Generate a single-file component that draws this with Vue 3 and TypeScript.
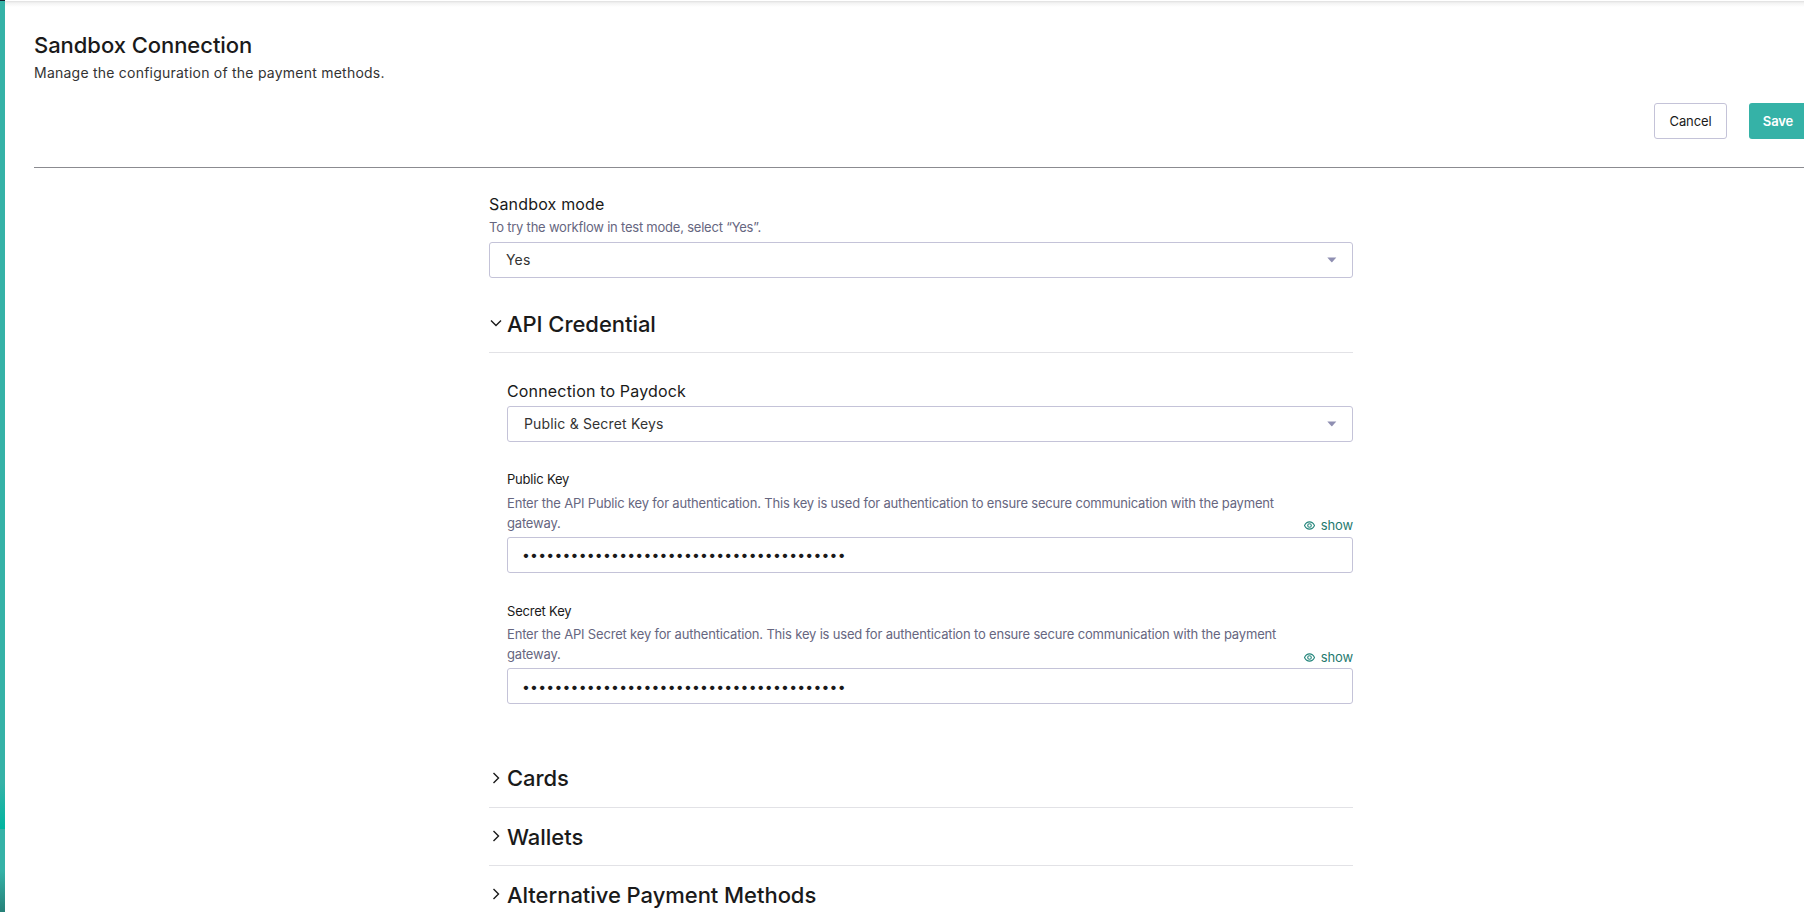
<script setup lang="ts">
import { ref } from 'vue'

interface KeyField {
  id: string
  label: string
  description: string
  value: string
  visible: boolean
}

const keys = ref<KeyField[]>([
  {
    id: 'public',
    label: 'Public Key',
    description:
      'Enter the API Public key for authentication. This key is used for authentication to ensure secure communication with the payment gateway.',
    value: 'x'.repeat(40),
    visible: false,
  },
  {
    id: 'secret',
    label: 'Secret Key',
    description:
      'Enter the API Secret key for authentication. This key is used for authentication to ensure secure communication with the payment gateway.',
    value: 'x'.repeat(40),
    visible: false,
  },
])

const collapsed: string[] = ['Cards', 'Wallets', 'Alternative Payment Methods']
</script>

<template>
  <div class="screen">
    <aside class="rail">
      <div class="rail-cap"></div>
      <div class="rail-main"></div>
      <div class="rail-foot"></div>
    </aside>
    <main class="page">
      <div class="top-shadow"></div>
      <header class="header">
        <h1 class="title">Sandbox Connection</h1>
        <p class="subtitle">Manage the configuration of the payment methods.</p>
        <div class="actions">
          <button class="btn cancel" type="button">Cancel</button>
          <button class="btn save" type="button">Save</button>
        </div>
      </header>

      <form class="form" @submit.prevent>
        <div class="label">Sandbox mode</div>
        <div class="hint">To try the workflow in test mode, select “Yes”.</div>
        <div class="select mode">
          <span>Yes</span>
          <svg class="caret" width="10" height="6" viewBox="0 0 10 6"><path d="M0.3 0.4h9L5.3 5.1a.7.7 0 0 1-1 0z" /></svg>
        </div>

        <section class="section open">
          <svg class="chevron" width="14" height="14" viewBox="0 0 14 14"><path d="M2 4.5l5 5 5-5" /></svg>
          <h2>API Credential</h2>
        </section>

        <div class="credentials">
          <div class="label">Connection to Paydock</div>
          <div class="select connection">
            <span>Public &amp; Secret Keys</span>
            <svg class="caret" width="10" height="6" viewBox="0 0 10 6"><path d="M0.3 0.4h9L5.3 5.1a.7.7 0 0 1-1 0z" /></svg>
          </div>

          <div v-for="key in keys" :key="key.id" class="key" :class="key.id">
            <label class="key-label" :for="key.id">{{ key.label }}</label>
            <div class="key-info">
              <p class="hint">{{ key.description }}</p>
              <button class="toggle" type="button" @click="key.visible = !key.visible">
                <svg width="11" height="9" viewBox="0 0 11 9">
                  <path d="M.5 4.5C1.7 2 3.4.9 5.5.9S9.3 2 10.5 4.5C9.3 7 7.6 8.1 5.5 8.1S1.7 7 .5 4.5z" />
                  <circle cx="5.5" cy="4.5" r="1.8" />
                </svg>
                <span>{{ key.visible ? 'hide' : 'show' }}</span>
              </button>
            </div>
            <input :id="key.id" v-model="key.value" class="input" :type="key.visible ? 'text' : 'password'" />
          </div>
        </div>

        <section v-for="name in collapsed" :key="name" class="section">
          <svg class="chevron" width="14" height="14" viewBox="0 0 14 14"><path d="M4.5 2l5 5-5 5" /></svg>
          <h2>{{ name }}</h2>
        </section>
      </form>
    </main>
  </div>
</template>

<style>
body {
  margin: 0;
  overflow: hidden;
  background: #fff;
}
</style>

<style scoped>
* {
  box-sizing: border-box;
}
.screen {
  display: flex;
  width: 100%;
  height: 912px;
  overflow: hidden;
  font-family: Inter, 'Liberation Sans', sans-serif;
  color: #1a1a1a;
}
.rail {
  display: flex;
  flex: 0 0 5px;
  flex-direction: column;
}
.rail-cap {
  height: 1px;
  background: #16202c;
}
.rail-main {
  height: 828px;
  background: linear-gradient(to bottom, #35b2a7 0, #35b2a7 782px, #00b5a0 828px);
}
.rail-foot {
  flex: 1;
  background: linear-gradient(to bottom, #35b2a7 0, #35b2a7 42px, #268078 83px);
}
.page {
  flex: 1;
  min-width: 0;
}
.top-shadow {
  height: 7px;
  background: linear-gradient(to bottom, #fff 0, #fff 1px, #dfdfdf 1px, #f3f3f3 3px, #fff 7px);
}
.header {
  margin-left: 29px;
  padding-top: 24px;
  height: 161px;
  border-bottom: 1px solid #8b8b90;
}
.title,
.section h2 {
  margin: 0;
  font-size: 22px;
  line-height: 28px;
  font-weight: 500;
  letter-spacing: -0.05px;
}
.subtitle {
  margin: 4px 0 20px;
  font-size: 14px;
  line-height: 20px;
  letter-spacing: 0.23px;
  color: #333;
}
.actions {
  display: flex;
  justify-content: flex-end;
  gap: 22px;
  margin-right: -3px;
}
.btn {
  height: 36px;
  padding: 0;
  border-radius: 3px;
  font: 400 13px/20px Inter, sans-serif;
  letter-spacing: -0.1px;
}
.cancel {
  width: 73px;
  border: 1px solid #c4c3d8;
  background: #fff;
  color: #1a1a1a;
}
.save {
  width: 58px;
  border: 0;
  background: #35b2a7;
  color: #fff;
  font-weight: 600;
}
.form {
  width: 864px;
  margin: 24px 0 0 484px;
}
.label {
  font-size: 16px;
  line-height: 24px;
  letter-spacing: 0.17px;
}
.hint {
  margin: 0;
  font-size: 13px;
  line-height: 20px;
  letter-spacing: -0.18px;
  color: #666680;
}
.label + .hint {
  margin-top: 1px;
  letter-spacing: -0.22px;
}
.mode {
  margin-top: 5px;
}
.select {
  display: flex;
  align-items: center;
  justify-content: space-between;
  height: 36px;
  padding: 0 15px 0 16px;
  border: 1px solid #c4c3d8;
  border-radius: 3px;
  font-size: 14px;
  letter-spacing: 0.16px;
  color: #333;
}
.select span {
  padding-bottom: 1px;
}
.caret {
  fill: #8f8fb2;
}
.section {
  display: flex;
  height: 58px;
  padding-top: 15px;
  border-bottom: 1px solid #e2e2e6;
}
.section.open {
  margin-top: 17px;
}
.credentials + .section h2 {
  margin-top: -1px;
}
.chevron {
  margin: 6px 4px 0 0;
  fill: none;
  stroke: #1a1a1a;
  stroke-width: 1.4;
}
.credentials {
  height: 397px;
  padding: 26px 0 0 18px;
}
.connection {
  margin-top: 3px;
}
.key {
  margin-top: 27px;
}
.key.secret {
  margin-top: 28px;
}
.key-label {
  display: block;
  font-size: 13px;
  line-height: 20px;
  letter-spacing: -0.2px;
}
.key-info {
  display: flex;
  justify-content: space-between;
  align-items: flex-end;
  margin: 4px 0;
}
.secret .key-info {
  margin-top: 3px;
}
.key-info .hint {
  width: 780px;
}
.toggle {
  display: flex;
  align-items: center;
  gap: 6px;
  height: 20px;
  margin-bottom: -2px;
  padding: 0;
  border: 0;
  background: none;
  font: 400 13px/20px Inter, sans-serif;
  letter-spacing: -0.1px;
  color: #1f7a6f;
}
.secret .toggle {
  margin-bottom: -3px;
}
.toggle svg {
  fill: none;
  stroke: #23857b;
  stroke-width: 1.1;
}
.input {
  display: block;
  width: 100%;
  height: 36px;
  padding: 0 14px;
  border: 1px solid #c4c3d8;
  border-radius: 3px;
  outline: 0;
  background: #fff;
  font: 400 14px/20px Inter, sans-serif;
  letter-spacing: 0.22px;
  color: #1a1a1a;
}
.public .input {
  padding-bottom: 2px;
}
</style>
